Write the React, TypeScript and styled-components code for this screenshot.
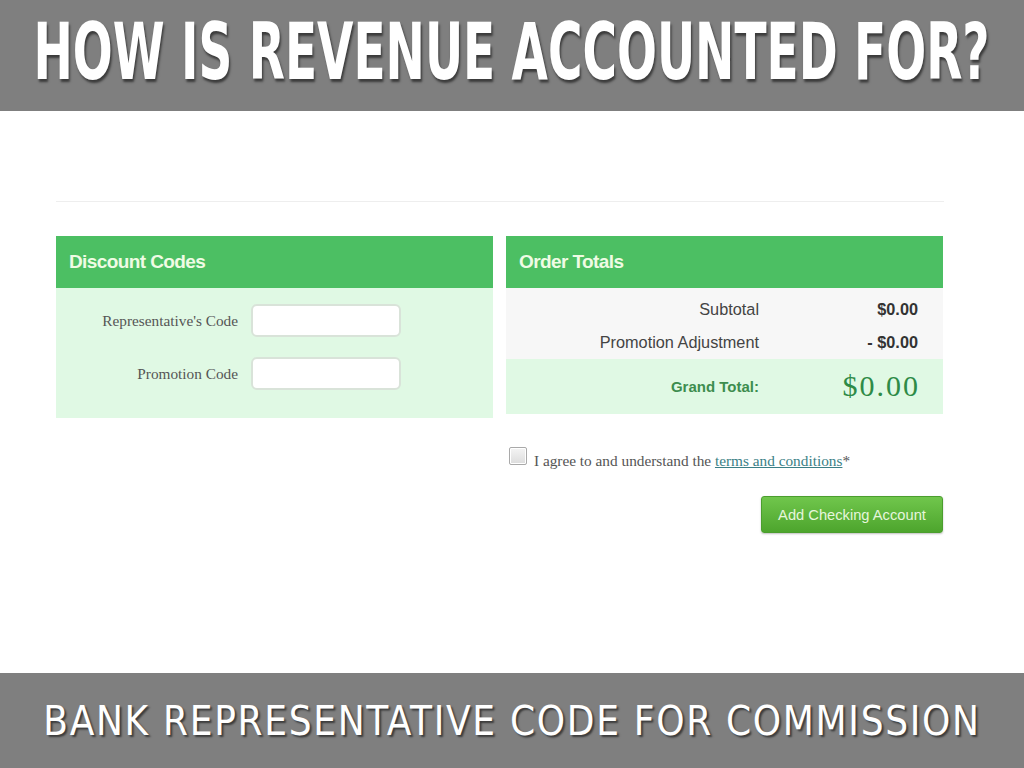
import React from 'react';
import styled, { createGlobalStyle } from 'styled-components';

const GlobalStyle = createGlobalStyle`
  html, body {
    margin: 0;
    padding: 0;
    background: #fff;
  }
  * {
    box-sizing: border-box;
  }
`;

const Page = styled.div`
  display: flex;
  flex-direction: column;
  width: 1024px;
  height: 768px;
  overflow: hidden;
`;

const Banner = styled.header<{ $height: number }>`
  display: flex;
  justify-content: center;
  align-items: center;
  height: ${(p) => p.$height}px;
  flex-shrink: 0;
  background: #7f7f7f;
  overflow: hidden;
`;

// condensed heavy headline, squeezed to the slide's width
const Title = styled.h1`
  margin: 0 0 8px;
  flex-shrink: 0;
  display: inline-block;
  font-family: 'DejaVu Sans Condensed', 'Liberation Sans', sans-serif;
  font-weight: bold;
  font-size: 78px;
  line-height: 1;
  color: #fff;
  white-space: nowrap;
  transform: scaleX(0.67);
  text-shadow: 2px 3px 3px rgba(0, 0, 0, 0.55);
`;

const Caption = styled.h2`
  margin: 0;
  display: inline-block;
  font-family: 'DejaVu Sans Condensed', 'Liberation Sans', sans-serif;
  font-weight: normal;
  font-size: 40px;
  letter-spacing: 1.7px;
  line-height: 1;
  color: #fff;
  white-space: nowrap;
  text-shadow: 2px 2px 2px rgba(0, 0, 0, 0.55);
`;

const Main = styled.main`
  flex: 1;
  padding: 90px 80px 0 56px;
`;

const Rule = styled.div`
  width: 888px;
  border-top: 1px solid #eeeeee;
  margin-bottom: 34px;
`;

const Columns = styled.div`
  display: grid;
  grid-template-columns: 437px 437px;
  column-gap: 13px;
  align-items: start;
`;

const Column = styled.div`
  display: flex;
  flex-direction: column;
`;

const PanelHead = styled.div`
  height: 52px;
  display: flex;
  align-items: center;
  padding-left: 13px;
  background: #4cbf63;
  color: #effbe4;
  font-family: 'Liberation Sans', Arial, sans-serif;
  font-weight: bold;
  font-size: 19px;
  letter-spacing: -0.6px;
`;

const DiscountBody = styled.div`
  height: 130px;
  padding-top: 16px;
  display: flex;
  flex-direction: column;
  gap: 20px;
  background: #e0f9e4;
`;

const FieldRow = styled.div`
  display: grid;
  grid-template-columns: 182px 150px;
  column-gap: 13px;
  align-items: center;
`;

const FieldLabel = styled.label`
  text-align: right;
  font-family: 'Liberation Serif', 'Times New Roman', serif;
  font-size: 15.3px;
  color: #555;
`;

const TextInput = styled.input`
  height: 33px;
  width: 150px;
  border: 2px solid #d9e3d9;
  border-radius: 6px;
  background: #fff;
`;

const TotalsRows = styled.div`
  display: flex;
  flex-direction: column;
  padding-top: 12px;
  height: 71px;
  gap: 14px;
  background: #f7f7f7;
`;

const TotalRow = styled.div`
  display: grid;
  grid-template-columns: 253px 159px;
  align-items: center;
  font-family: 'Liberation Sans', Arial, sans-serif;
  font-size: 16.3px;
  line-height: 19px;
  color: #444;
`;

const TotalLabel = styled.span`
  text-align: right;
`;

const TotalValue = styled.span`
  text-align: right;
  font-weight: bold;
  color: #333;
`;

const GrandRow = styled(TotalRow)`
  height: 55px;
  background: #e0f9e4;
  padding-bottom: 1px;
`;

const GrandLabel = styled(TotalLabel)`
  font-weight: bold;
  font-size: 15px;
  color: #3d8d4e;
`;

const GrandValue = styled.span`
  text-align: right;
  font-family: 'Liberation Serif', Georgia, serif;
  font-size: 30px;
  line-height: 30px;
  color: #2e8b47;
  letter-spacing: 2px;
  margin-right: -2px;
`;

const AgreeRow = styled.div`
  display: flex;
  align-items: flex-start;
  margin-top: 33px;
  padding-left: 3px;
  gap: 7px;
  font-family: 'Liberation Serif', 'Times New Roman', serif;
  font-size: 15.3px;
  line-height: 17px;
  color: #555;
`;

const AgreeText = styled.span`
  padding-top: 5px;
`;

const CheckBox = styled.span`
  width: 18px;
  height: 18px;
  flex-shrink: 0;
  border: 1px solid #a9a9a9;
  border-radius: 2px;
  background: linear-gradient(#f4f4f4, #dcdcdc);
  box-shadow: inset 0 0 0 1px #fff;
`;

const TermsLink = styled.a`
  color: #3b7f86;
  text-decoration: underline;
`;

const Actions = styled.div`
  display: flex;
  justify-content: flex-end;
  margin-top: 27px;
`;

const AddButton = styled.button`
  width: 182px;
  height: 37px;
  border: 1px solid #4b9e2e;
  border-radius: 3px;
  background: linear-gradient(#70c64c, #4da52d);
  color: #e6f6dc;
  font-family: 'Liberation Sans', Arial, sans-serif;
  font-size: 14.7px;
  box-shadow: 0 1px 2px rgba(0, 0, 0, 0.25);
`;

const App = () => (
  <Page>
    <GlobalStyle />
    <Banner $height={111}>
      <Title>HOW IS REVENUE ACCOUNTED FOR?</Title>
    </Banner>
    <Main>
      <Rule />
      <Columns>
        <Column>
          <PanelHead>Discount Codes</PanelHead>
          <DiscountBody>
            <FieldRow>
              <FieldLabel>Representative's Code</FieldLabel>
              <TextInput />
            </FieldRow>
            <FieldRow>
              <FieldLabel>Promotion Code</FieldLabel>
              <TextInput />
            </FieldRow>
          </DiscountBody>
        </Column>
        <Column>
          <PanelHead>Order Totals</PanelHead>
          <TotalsRows>
            <TotalRow>
              <TotalLabel>Subtotal</TotalLabel>
              <TotalValue>$0.00</TotalValue>
            </TotalRow>
            <TotalRow>
              <TotalLabel>Promotion Adjustment</TotalLabel>
              <TotalValue>- $0.00</TotalValue>
            </TotalRow>
          </TotalsRows>
          <GrandRow>
            <GrandLabel>Grand Total:</GrandLabel>
            <GrandValue>$0.00</GrandValue>
          </GrandRow>
          <AgreeRow>
            <CheckBox />
            <AgreeText>
              I agree to and understand the <TermsLink href="#">terms and conditions</TermsLink>*
            </AgreeText>
          </AgreeRow>
          <Actions>
            <AddButton>Add Checking Account</AddButton>
          </Actions>
        </Column>
      </Columns>
    </Main>
    <Banner $height={95}>
      <Caption>BANK REPRESENTATIVE CODE FOR COMMISSION</Caption>
    </Banner>
  </Page>
);

export default App;
